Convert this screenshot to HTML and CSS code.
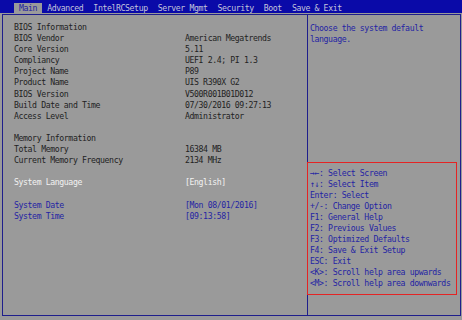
FILE: index.html
```html
<!DOCTYPE html>
<html lang="en">
<head>
    <meta charset="UTF-8">
    <meta name="viewport" content="width=device-width, initial-scale=1.0">
    <title>Aptio Setup Utility - Main</title>
    <link rel="stylesheet" href="styles.css">
</head>
<body>
    <div class="tabs">
        <span class="tab active">Main</span>
        <span class="tab">Advanced</span>
        <span class="tab">IntelRCSetup</span>
        <span class="tab">Server Mgmt</span>
        <span class="tab">Security</span>
        <span class="tab">Boot</span>
        <span class="tab">Save &amp; Exit</span>
    </div>
    <div class="frame">
        <div class="main">
            <div class="row"><span>BIOS Information</span></div>
            <div class="row"><span>BIOS Vendor</span><span>American Megatrends</span></div>
            <div class="row"><span>Core Version</span><span>5.11</span></div>
            <div class="row"><span>Compliancy</span><span>UEFI 2.4; PI 1.3</span></div>
            <div class="row"><span>Project Name</span><span>P89</span></div>
            <div class="row"><span>Product Name</span><span>UIS R390X G2</span></div>
            <div class="row"><span>BIOS Version</span><span>V500R001B01D012</span></div>
            <div class="row"><span>Build Date and Time</span><span>07/30/2016 09:27:13</span></div>
            <div class="row"><span>Access Level</span><span>Administrator</span></div>
            <div class="blank"></div>
            <div class="row"><span>Memory Information</span></div>
            <div class="row"><span>Total Memory</span><span>16384 MB</span></div>
            <div class="row"><span>Current Memory Frequency</span><span>2134 MHz</span></div>
            <div class="blank"></div>
            <div class="row selected"><span>System Language</span><span>[English]</span></div>
            <div class="blank"></div>
            <div class="row option"><span>System Date</span><span>[Mon 08/01/2016]</span></div>
            <div class="row option"><span>System Time</span><span>[09:13:58]</span></div>
        </div>
        <div class="side">
            <p class="help">Choose the system default<br>language.</p>
            <div class="keys">
                <div>&rarr;&larr;: Select Screen</div>
                <div>&uarr;&darr;: Select Item</div>
                <div>Enter: Select</div>
                <div>+/-: Change Option</div>
                <div>F1: General Help</div>
                <div>F2: Previous Values</div>
                <div>F3: Optimized Defaults</div>
                <div>F4: Save &amp; Exit Setup</div>
                <div>ESC: Exit</div>
                <div>&lt;K&gt;: Scroll help area upwards</div>
                <div>&lt;M&gt;: Scroll help area downwards</div>
            </div>
        </div>
    </div>
</body>
</html>
```

FILE: styles.css
```css
body {
    font-family: "DejaVu Sans Mono", "Liberation Mono", monospace;
    font-size: 8.2px;
    letter-spacing: -0.4px;
    background-color: #9a9a9a;
    color: #222;
    margin: 0;
    padding: 0;
}
.tabs {
    display: flex;
    align-items: flex-end;
    height: 13px;
    padding-left: 14px;
    background-color: #0a0aa8;
}
.tab {
    padding: 0 5px;
    height: 10px;
    line-height: 10px;
    color: #c4c4dc;
    white-space: pre;
}
.tab.active {
    background-color: #9a9a9a;
    color: #2222a0;
}
.frame {
    display: grid;
    grid-template-columns: 304px 1fr;
    height: 300px;
    margin: 1px 1px 0 2px;
    border: 1px solid #1e1e8c;
}
.main {
    padding: 7px 0 0 11px;
    line-height: 11.1px;
}
.row {
    display: grid;
    grid-template-columns: 171px 1fr;
    white-space: pre;
}
.blank {
    height: 11.1px;
}
.row.selected {
    color: #f2f2f2;
}
.row.option {
    color: #2424a4;
}
.side {
    display: flex;
    flex-direction: column;
    border-left: 1px solid #1e1e8c;
    color: #2424a4;
}
.help {
    margin: 0;
    padding: 8px 0 0 2px;
    line-height: 11px;
}
.keys {
    margin: auto 3px 20px -1px;
    padding: 5px 0 5px 2px;
    border: 1px solid #e42424;
    line-height: 11px;
    white-space: nowrap;
}
```
